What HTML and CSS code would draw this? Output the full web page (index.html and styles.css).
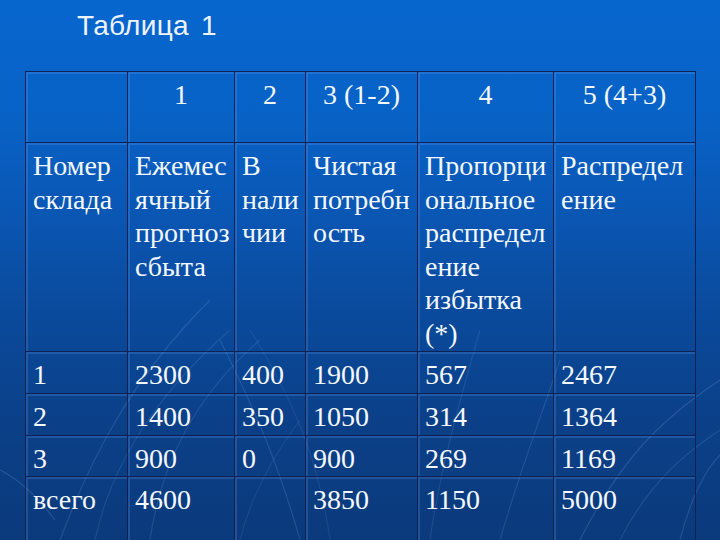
FILE: index.html
```html
<!DOCTYPE html>
<html lang="ru">
<head>
<meta charset="utf-8">
<title>Таблица 1</title>
<link rel="stylesheet" href="styles.css">
</head>
<body>
<div class="slide">
  <svg class="streaks" width="720" height="540" viewBox="0 0 720 540" aria-hidden="true">
    <g fill="none" stroke="#9cc4ff" stroke-width="1.2">
      <path d="M60 540 C 90 460, 130 380, 210 300" stroke-opacity="0.16"/>
      <path d="M95 540 C 110 470, 150 400, 230 330" stroke-opacity="0.12"/>
      <path d="M150 540 C 160 470, 190 400, 260 340" stroke-opacity="0.14"/>
      <path d="M300 540 C 280 470, 260 420, 220 340" stroke-opacity="0.16"/>
      <path d="M330 540 C 320 470, 300 410, 250 330" stroke-opacity="0.1"/>
      <path d="M430 540 C 440 470, 460 400, 480 330" stroke-opacity="0.12"/>
      <path d="M500 540 C 520 470, 540 420, 560 360" stroke-opacity="0.14"/>
      <path d="M580 540 C 620 460, 660 420, 720 380" stroke-opacity="0.18"/>
      <path d="M620 540 C 650 480, 690 450, 720 430" stroke-opacity="0.14"/>
      <path d="M0 470 C 20 480, 40 500, 55 520" stroke-opacity="0.18"/>
      <path d="M240 540 C 250 500, 270 460, 300 420" stroke-opacity="0.1"/>
      <path d="M680 540 C 690 500, 705 470, 720 455" stroke-opacity="0.16"/>
    </g>
  </svg>
  <h1 class="title">Таблица 1</h1>
  <table class="grid">
    <colgroup>
      <col class="c1"><col class="c2"><col class="c3"><col class="c4"><col class="c5"><col class="c6">
    </colgroup>
    <tr class="r-num">
      <td class="cell"></td><td class="cell">1</td><td class="cell">2</td><td class="cell">3 (1-2)</td><td class="cell">4</td><td class="cell">5 (4+3)</td>
    </tr>
    <tr class="r-head">
      <td class="cell">Номер<br>склада</td>
      <td class="cell">Ежемес<br>ячный<br>прогноз<br>сбыта</td>
      <td class="cell">В<br>нали<br>чии</td>
      <td class="cell">Чистая<br>потребн<br>ость</td>
      <td class="cell">Пропорци<br>ональное<br>распредел<br>ение<br>избытка<br>(*)</td>
      <td class="cell">Распредел<br>ение</td>
    </tr>
    <tr class="r-data">
      <td class="cell">1</td><td class="cell">2300</td><td class="cell">400</td><td class="cell">1900</td><td class="cell">567</td><td class="cell">2467</td>
    </tr>
    <tr class="r-data">
      <td class="cell">2</td><td class="cell">1400</td><td class="cell">350</td><td class="cell">1050</td><td class="cell">314</td><td class="cell">1364</td>
    </tr>
    <tr class="r-data r-short">
      <td class="cell">3</td><td class="cell">900</td><td class="cell">0</td><td class="cell">900</td><td class="cell">269</td><td class="cell">1169</td>
    </tr>
    <tr class="r-data r-last">
      <td class="cell">всего</td><td class="cell">4600</td><td class="cell"></td><td class="cell">3850</td><td class="cell">1150</td><td class="cell">5000</td>
    </tr>
  </table>
</div>
</body>
</html>
```

FILE: styles.css
```css
html, body {
  margin: 0;
  padding: 0;
}
body {
  width: 720px;
  height: 540px;
  overflow: hidden;
  background: #0a4aa0;
}
.slide {
  position: relative;
  width: 720px;
  height: 540px;
  overflow: hidden;
  background: linear-gradient(180deg, #0766ce 0%, #0862c6 22%, #0a56b3 40%, #0a4a9c 58%, #0b4088 78%, #0b3a7c 100%);
}
.streaks {
  position: absolute;
  left: 0;
  top: 0;
  z-index: 0;
}
.title {
  position: relative;
  z-index: 1;
  margin: 0;
  padding: 10px 0 0 77px;
  height: 32px;
  font-family: "Liberation Sans", Arial, sans-serif;
  font-weight: normal;
  font-size: 28px;
  line-height: 32px;
  letter-spacing: 0.3px;
  word-spacing: 4px;
  color: #eef4ff;
}
.grid {
  position: relative;
  z-index: 1;
  margin: 29px 0 0 25px;
  border-collapse: collapse;
  table-layout: fixed;
  width: 670px;
}
.c1 { width: 102px; }
.c2 { width: 107px; }
.c3 { width: 71px; }
.c4 { width: 112px; }
.c5 { width: 136px; }
.c6 { width: 142px; }
.cell {
  font-family: "Liberation Serif", Tinos, "Times New Roman", Times, "Nimbus Roman", "Nimbus Roman No9 L", FreeSerif, "Noto Serif", "DejaVu Serif", serif;
  font-size: 28px;
  line-height: 33.6px;
  color: #f4f8ff;
  border: 1px solid #0c2254;
  padding: 6px 7px 0 7px;
  vertical-align: top;
  white-space: nowrap;
  overflow: hidden;
  box-shadow: inset 2px 2px 0 rgba(120, 170, 245, 0.22);
}
.r-num .cell {
  height: 64px;
  text-align: center;
}
.r-head .cell {
  height: 201px;
}
.r-data .cell {
  height: 35px;
}
.r-short .cell {
  height: 34px;
}
.r-last .cell {
  height: 90px;
}
```
